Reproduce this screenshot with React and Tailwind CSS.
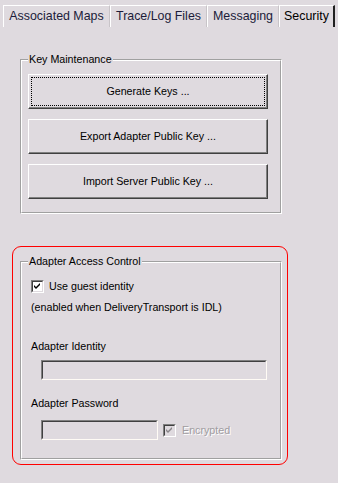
import React from 'react';

const tabs = [
  { label: 'Associated Maps', width: 'w-[107px]' },
  { label: 'Trace/Log Files', width: 'w-[97px]' },
  { label: 'Messaging', width: 'w-[72px]' },
  { label: 'Security', width: 'w-[56px]', active: true },
];

const GroupBox = ({ title, className = '', children }) => (
  <div className={`relative border border-t-[#a0a0a0] border-l-[#a0a0a0] border-r-white border-b-white ${className}`}>
    <div className="border border-t-white border-l-white border-r-[#a0a0a0] border-b-[#a0a0a0] h-full">
      {children}
    </div>
    <span className="absolute left-[7px] top-[-7px] bg-[#dfdadf] px-[1px] text-[10.7px] leading-[13px] text-black">
      {title}
    </span>
  </div>
);

const Button = ({ label, focused }) => (
  <button className="w-[240px] h-[35px] bg-[#dfdadf] text-[10.7px] text-black border border-t-white border-l-white border-r-[#404040] border-b-[#404040] shadow-[inset_-1px_-1px_0_#808080]">
    <span className={`flex items-center justify-center ${focused ? 'mx-[2px] h-[29px] border border-dotted border-black' : 'h-full'}`}>
      {label}
    </span>
  </button>
);

const Checkbox = ({ checked, disabled }) => (
  <span
    className={`flex items-center justify-center w-[13px] h-[13px] border border-t-[#808080] border-l-[#808080] border-r-white border-b-white ${disabled ? 'bg-[#dfdadf]' : 'bg-white'}`}
  >
    <span className="flex w-full h-full items-center justify-center border border-t-[#404040] border-l-[#404040] border-r-[#dfdadf] border-b-[#dfdadf]">
      {checked && (
        <svg width="7" height="7" viewBox="0 0 7 7">
          <path d="M0 2 L2 4 L6 0 L6 2 L2 6 L0 4 Z" fill={disabled ? '#8a868a' : '#000'} />
        </svg>
      )}
    </span>
  </span>
);

const Field = ({ width }) => (
  <div className={`${width} h-[20px] border border-t-[#808080] border-l-[#808080] border-r-[#fffbf5] border-b-[#fffbf5]`}>
    <div className="h-full border border-t-[#404040] border-l-[#404040] border-r-[#dfdadf] border-b-[#dfdadf] bg-[#dfdadf]" />
  </div>
);

export default function App() {
  return (
    <div className="w-[338px] h-[483px] bg-[#dfdadf] overflow-hidden text-black font-['Liberation_Sans',Arial,sans-serif]">
      {/* Tabs */}
      <div className="flex pt-[5px] pl-[3px]">
        {tabs.map((t) => (
          <div
            key={t.label}
            className={`${t.width} h-[22px] flex items-center justify-center text-[12.4px] border-t border-l border-t-white border-l-white ${
              t.active ? 'border-r-2 border-r-[#202020] text-black' : 'border-r border-r-[#c8c4c8] text-[#1c1c3a]'
            }`}
          >
            {t.label}
          </div>
        ))}
      </div>

      {/* Key Maintenance */}
      <GroupBox title="Key Maintenance" className="ml-[20px] mt-[32px] w-[262px] h-[155px]">
        <div className="flex flex-col gap-[10px] pl-[6px] pt-[13px]">
          <Button label="Generate Keys ..." focused />
          <Button label="Export Adapter Public Key ..." />
          <Button label="Import Server Public Key ..." />
        </div>
      </GroupBox>

      {/* Adapter Access Control */}
      <div className="ml-[12px] mt-[32px] w-[276px] h-[219px] border border-[#ff0000] rounded-[9px] pl-[7px] pt-[14px]">
        <GroupBox title="Adapter Access Control" className="w-[262px] h-[199px]">
          <div className="pl-[9px] pt-[17px] text-[10.7px] leading-[13px]">
            <div className="flex items-center gap-[5px]">
              <Checkbox checked />
              <span>Use guest identity</span>
            </div>
            <div className="mt-[8px]">(enabled when DeliveryTransport is IDL)</div>
            <div className="mt-[26px]">Adapter Identity</div>
            <div className="mt-[7px] ml-[10px]">
              <Field width="w-[226px]" />
            </div>
            <div className="mt-[17px]">Adapter Password</div>
            <div className="mt-[10px] ml-[10px] flex items-center">
              <Field width="w-[117px]" />
              <div className="ml-[5px]">
                <Checkbox checked disabled />
              </div>
              <span className="ml-[6px] text-[#a09ca0] [text-shadow:1px_1px_0_#ffffff]">Encrypted</span>
            </div>
          </div>
        </GroupBox>
      </div>
    </div>
  );
}
